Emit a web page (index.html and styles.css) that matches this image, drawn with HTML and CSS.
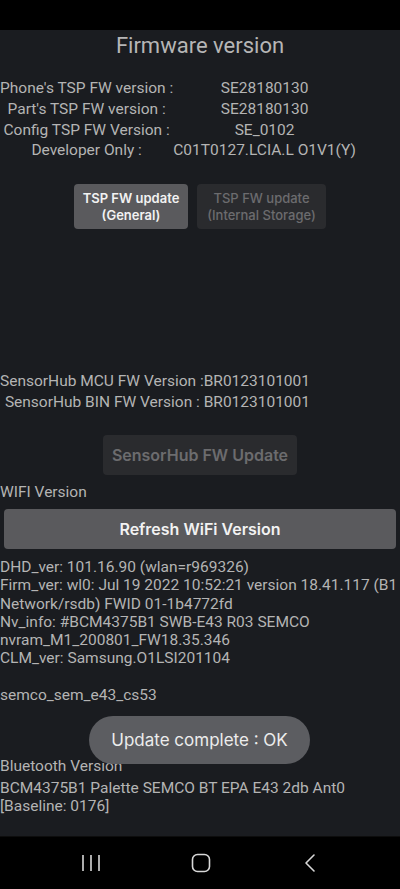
FILE: index.html
```html
<!DOCTYPE html>
<html>
<head>
<meta charset="utf-8">
<link rel="stylesheet" href="styles.css">
</head>
<body>
<div class="screen">
  <div class="status"></div>
  <div class="content">
    <div class="title">Firmware version</div>
    <table class="tsp">
      <tr><td>Phone's TSP FW version :</td><td>SE28180130</td></tr>
      <tr><td>Part's TSP FW version :</td><td>SE28180130</td></tr>
      <tr><td>Config TSP FW Version :</td><td>SE_0102</td></tr>
      <tr><td>Developer Only :</td><td>C01T0127.LCIA.L O1V1(Y)</td></tr>
    </table>
    <div class="btn-row">
      <div class="btn btn-on btn-general">TSP FW update<br>(General)</div>
      <div class="btn btn-off btn-internal">TSP FW update<br>(Internal Storage)</div>
    </div>
    <div class="sensor">
      <div>SensorHub MCU FW Version :BR0123101001</div>
      <div>SensorHub BIN FW Version : BR0123101001</div>
    </div>
    <div class="btn btn-off btn-sensor">SensorHub FW Update</div>
    <div class="label wifi-label">WIFI Version</div>
    <div class="btn btn-on btn-refresh">Refresh WiFi Version</div>
    <div class="info">DHD_ver: 101.16.90 (wlan=r969326)
Firm_ver: wl0: Jul 19 2022 10:52:21 version 18.41.117 (B1
Network/rsdb) FWID 01-1b4772fd
Nv_info: #BCM4375B1 SWB-E43 R03 SEMCO
nvram_M1_200801_FW18.35.346
CLM_ver: Samsung.O1LSI201104

semco_sem_e43_cs53</div>
    <div class="label bt-label">Bluetooth Version</div>
    <div class="info">BCM4375B1 Palette SEMCO BT EPA E43 2db Ant0
[Baseline: 0176]</div>
    <div class="toast">Update complete : OK</div>
  </div>
  <div class="navbar">
    <svg class="nav-icon" width="20" height="20" viewBox="0 0 20 20">
      <path d="M2 2v16M10 2v16M18 2v16" stroke="#d8d8d8" stroke-width="1.6" fill="none"/>
    </svg>
    <svg class="nav-icon" width="20" height="20" viewBox="0 0 20 20">
      <rect x="1.5" y="1.5" width="17" height="17" rx="5" stroke="#d8d8d8" stroke-width="1.6" fill="none"/>
    </svg>
    <svg class="nav-icon" width="20" height="20" viewBox="0 0 20 20">
      <path d="M14 2L6 10l8 8" stroke="#d8d8d8" stroke-width="1.6" fill="none" stroke-linecap="round" stroke-linejoin="round"/>
    </svg>
  </div>
</div>
</body>
</html>
```

FILE: styles.css
```css
html, body {
  margin: 0;
  padding: 0;
  background: #000;
}
.screen {
  width: 400px;
  height: 889px;
  display: flex;
  flex-direction: column;
  font-family: Roboto, "Noto Sans", sans-serif;
  color: #b4b4b4;
  overflow: hidden;
}
.status {
  height: 30px;
  background: #000;
  flex: none;
}
.content {
  position: relative;
  height: 806px;
  flex: none;
  background: #1a1c20;
  display: flex;
  flex-direction: column;
  overflow: hidden;
}
.title {
  margin-top: 1px;
  font-size: 22px;
  line-height: 30px;
  text-align: center;
  color: #b6b6b6;
}
.tsp {
  align-self: flex-start;
  border-collapse: collapse;
  margin-top: 17px;
  font-size: 15.5px;
  line-height: 20.8px;
}
.tsp td {
  padding: 0;
  text-align: center;
  white-space: nowrap;
}
.btn-row {
  display: flex;
  justify-content: center;
  gap: 9px;
  margin-top: 23px;
}
.btn {
  display: flex;
  align-items: center;
  justify-content: center;
  text-align: center;
  font-family: Inter, Roboto, sans-serif;
  font-weight: 600;
  border-radius: 4px;
  box-sizing: border-box;
}
.btn-on {
  background: #5a5a5d;
  color: #f2f2f2;
}
.btn-off {
  background: #2a2b2e;
  color: #6c6c6e;
}
.btn-general {
  width: 114px;
  height: 45px;
  font-size: 13px;
  line-height: 17px;
}
.btn-internal {
  width: 129px;
  height: 45px;
  font-size: 13px;
  line-height: 17px;
  font-weight: 500;
}
.sensor {
  margin-top: 142px;
  align-self: flex-start;
  text-align: right;
  font-size: 15.5px;
  line-height: 21px;
  white-space: nowrap;
}
.btn-sensor {
  align-self: center;
  width: 194px;
  height: 40px;
  margin-top: 22px;
  font-size: 16px;
}
.label {
  font-size: 15.5px;
  line-height: 19px;
  white-space: nowrap;
}
.wifi-label {
  margin-top: 8px;
}
.btn-refresh {
  margin: 7px 4px 0;
  height: 40px;
  font-size: 16px;
}
.info {
  font-size: 15.5px;
  line-height: 18.2px;
  white-space: pre;
  margin-top: 9px;
}
.bt-label {
  margin-top: 53px;
  line-height: 18px;
}
.bt-label + .info {
  margin-top: 4px;
}
.toast {
  position: absolute;
  left: 89px;
  top: 686px;
  width: 221px;
  height: 48px;
  border-radius: 24px;
  background: #5c5d61;
  color: #ececec;
  font-size: 17px;
  display: flex;
  align-items: center;
  justify-content: center;
  font-family: Inter, Roboto, sans-serif;
}
.navbar {
  flex: 1;
  background: #000;
  display: flex;
  align-items: center;
  justify-content: space-between;
  padding: 0 80px 0 81px;
  border-top: 1px solid #0d0d0d;
}
.nav-icon {
  display: block;
}
```
